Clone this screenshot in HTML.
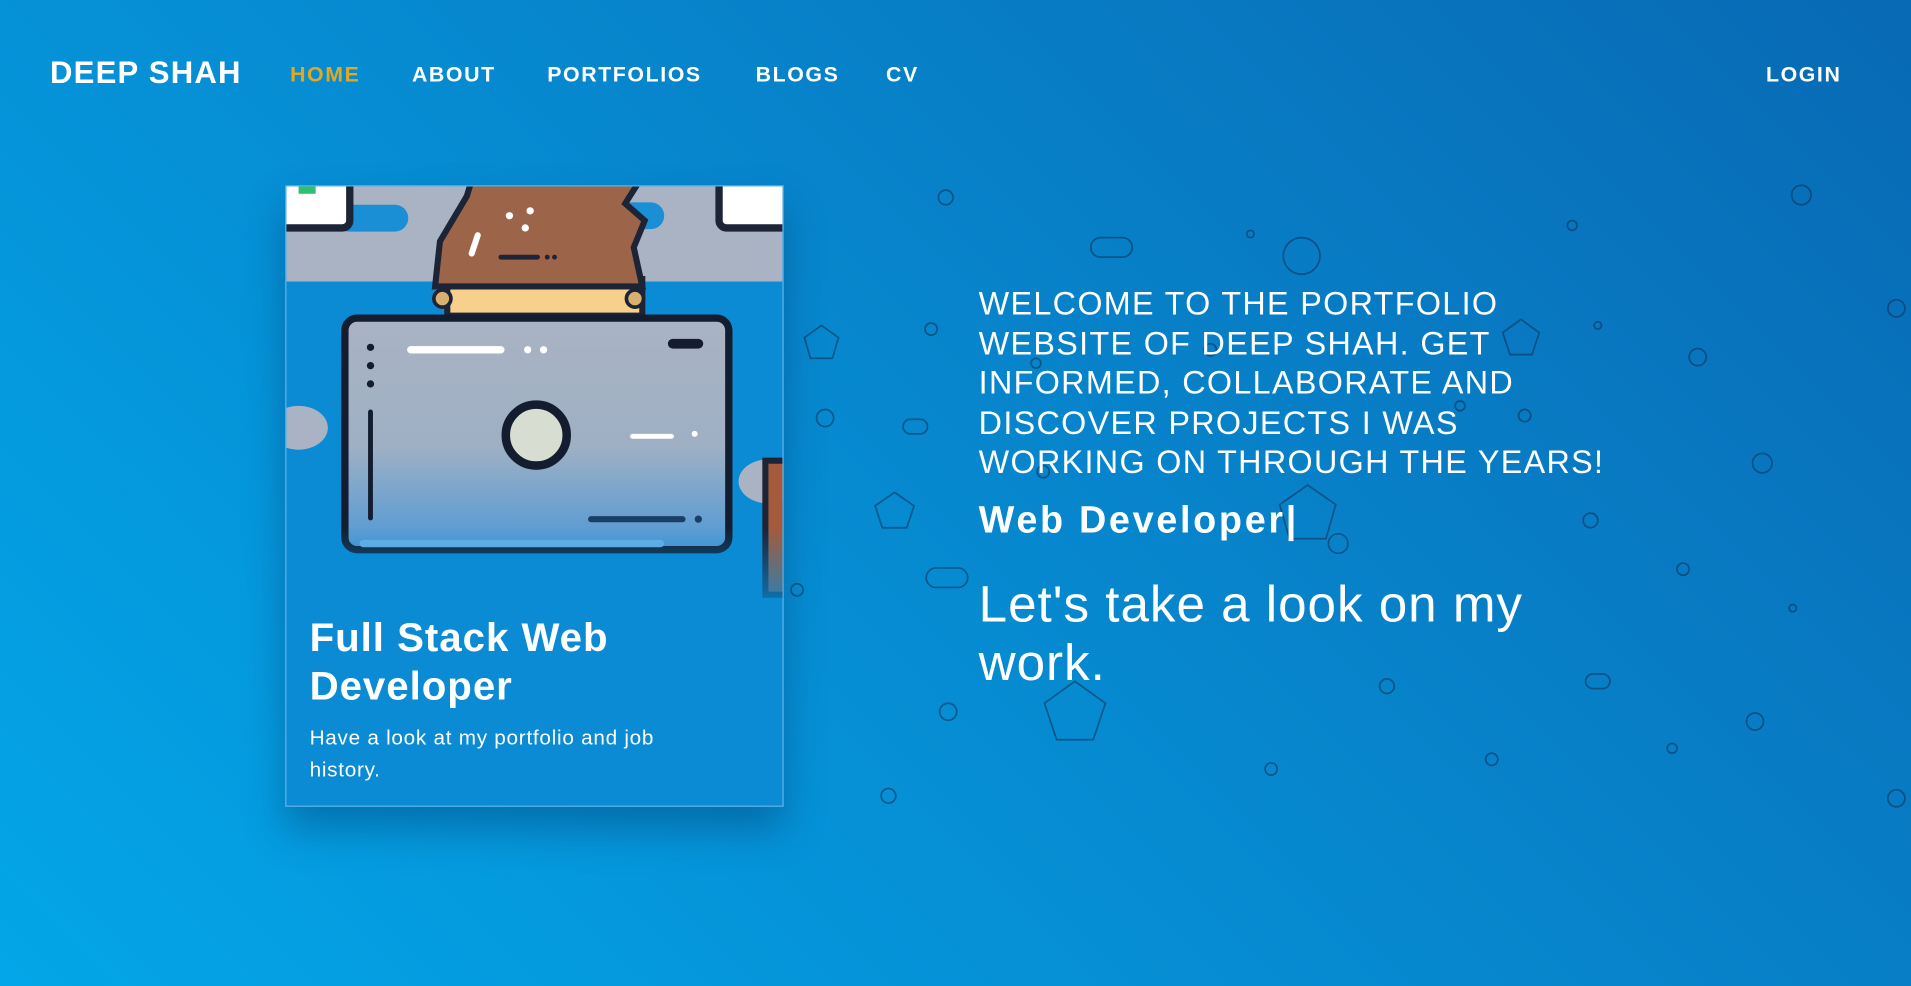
<!DOCTYPE html>
<html><head><meta charset="utf-8"><style>
html,body{margin:0;padding:0;width:1911px;height:986px;overflow:hidden;}
body{background:linear-gradient(225deg,#0869b4 0%,#0785cc 45%,#03a6e8 100%);font-family:"Liberation Sans",sans-serif;color:#fff;}
#w{position:absolute;left:0;top:0;width:1568px;height:809px;transform:scale(1.21875);transform-origin:0 0;}
.a{position:absolute;white-space:nowrap;}
.nav{font-weight:bold;font-size:17.5px;letter-spacing:1.3px;top:51px;}
.card{position:absolute;left:234px;top:152px;width:407px;height:508px;border:1px solid #5fb3ea;background:#0a8bd4;box-shadow:0 18px 30px rgba(0,40,90,.35);overflow:hidden;}
</style></head><body><div id="w">
<svg style="position:absolute;left:0;top:0" width="1568" height="809" fill="none" stroke="#0d2d50" stroke-opacity=".55" stroke-width="1.4">
<circle cx="776" cy="162" r="6"/><circle cx="1068" cy="210" r="15"/><circle cx="1026" cy="192" r="3"/><circle cx="1290" cy="185" r="4"/><circle cx="1478" cy="160" r="8"/><circle cx="764" cy="270" r="5"/><circle cx="1393" cy="293" r="7"/><circle cx="1311" cy="267" r="3"/><circle cx="1556" cy="253" r="7"/><circle cx="677" cy="343" r="7"/><circle cx="1251" cy="341" r="5"/><circle cx="1198" cy="333" r="4"/><circle cx="1446" cy="380" r="8"/><circle cx="856" cy="387" r="5"/><circle cx="1305" cy="427" r="6"/><circle cx="1098" cy="446" r="8"/><circle cx="1381" cy="467" r="5"/><circle cx="1471" cy="499" r="3"/><circle cx="654" cy="484" r="5"/><circle cx="778" cy="584" r="7"/><circle cx="1138" cy="563" r="6"/><circle cx="1440" cy="592" r="7"/><circle cx="1372" cy="614" r="4"/><circle cx="1224" cy="623" r="5"/><circle cx="1043" cy="631" r="5"/><circle cx="729" cy="653" r="6"/><circle cx="1556" cy="655" r="7"/><circle cx="993" cy="287" r="5"/><circle cx="850" cy="298" r="4"/>
<rect x="895" y="195" width="34" height="16" rx="8"/><rect x="741" y="344" width="20" height="12" rx="6"/><rect x="760" y="466" width="34" height="16" rx="8"/><rect x="1301" y="553" width="20" height="12" rx="6"/>
<polygon points="674,267 688,277 683,294 665,294 660,277"/><polygon points="1248,262 1263,273 1257,291 1239,291 1233,273"/><polygon points="734,404 750,415 744,433 724,433 718,415"/><polygon points="1073,398 1096,414 1088,442 1058,442 1050,414"/><polygon points="882,559 907,577 897,607 867,607 857,577"/>
</svg>
<div class="a" style="left:41px;top:46px;font-size:25.5px;font-weight:bold;letter-spacing:1px">DEEP SHAH</div>
<div class="a nav" style="left:238px;color:#e3a81f">HOME</div>
<div class="a nav" style="left:338px">ABOUT</div>
<div class="a nav" style="left:449px">PORTFOLIOS</div>
<div class="a nav" style="left:620px">BLOGS</div>
<div class="a nav" style="left:727px">CV</div>
<div class="a nav" style="left:1449px">LOGIN</div>
<div class="card">
<svg width="407" height="360" style="position:absolute;left:0;top:0">
<defs><linearGradient id="m" x1="0" y1="0" x2="0" y2="1"><stop offset="0" stop-color="#a9b3c3"/><stop offset=".55" stop-color="#9fb0c4"/><stop offset="1" stop-color="#4f98d6"/></linearGradient>
<linearGradient id="f" x1="0" y1="0" x2="0" y2="1"><stop offset="0" stop-color="#0a8bd4" stop-opacity="0"/><stop offset="1" stop-color="#0a8bd4"/></linearGradient></defs>
<rect x="0" y="0" width="407" height="78" fill="#a9b3c3"/>
<rect x="40" y="15" width="60" height="22" rx="11" fill="#1b8fd6"/><rect x="270" y="13" width="40" height="22" rx="11" fill="#1b8fd6"/>
<rect x="-10" y="-10" width="62" height="44" rx="6" fill="#fff" stroke="#1c2436" stroke-width="6"/><rect x="10" y="0" width="14" height="6" fill="#2fbf71"/>
<rect x="355" y="-10" width="62" height="44" rx="6" fill="#fff" stroke="#1c2436" stroke-width="6"/>
<ellipse cx="10" cy="198" rx="24" ry="18" fill="#a9b3c3"/><ellipse cx="395" cy="242" rx="24" ry="18" fill="#a9b3c3"/>
<rect x="393" y="225" width="20" height="110" fill="#a45a3b" stroke="#1c2436" stroke-width="5"/>
<rect x="132" y="76" width="160" height="30" fill="#f6d08c" stroke="#1c2436" stroke-width="5"/>
<circle cx="128" cy="92" r="7" fill="#d9b070" stroke="#1c2436" stroke-width="3"/><circle cx="286" cy="92" r="7" fill="#d9b070" stroke="#1c2436" stroke-width="3"/>
<path d="M122 82 L126 45 L148 8 L152 -5 L290 -5 L278 14 L294 28 L285 50 L292 82 Z" fill="#9c6448" stroke="#1c2436" stroke-width="5"/>
<path d="M176 58 L206 58" stroke="#1c2436" stroke-width="4" stroke-linecap="round"/><circle cx="214" cy="58" r="2" fill="#1c2436"/><circle cx="220" cy="58" r="2" fill="#1c2436"/>
<circle cx="183" cy="24" r="3" fill="#fff"/><circle cx="196" cy="34" r="3" fill="#fff"/><circle cx="200" cy="20" r="3" fill="#fff"/>
<path d="M152 55 L157 40" stroke="#fff" stroke-width="5" stroke-linecap="round"/>
<path d="M130 300 L145 240 L170 300 Z M230 300 L255 240 L275 300 Z" fill="#5a9ec9"/>
<rect x="48" y="108" width="315" height="190" rx="10" fill="url(#m)" stroke="#141d30" stroke-width="6"/>
<rect x="60" y="290" width="250" height="6" rx="3" fill="#6cb4e8"/>
<circle cx="69" cy="132" r="3" fill="#141d30"/><circle cx="69" cy="147" r="3" fill="#141d30"/><circle cx="69" cy="162" r="3" fill="#141d30"/>
<path d="M69 185 L69 272" stroke="#141d30" stroke-width="4" stroke-linecap="round"/>
<path d="M102 134 L176 134" stroke="#fff" stroke-width="6" stroke-linecap="round"/><circle cx="198" cy="134" r="3" fill="#fff"/><circle cx="211" cy="134" r="3" fill="#fff"/>
<path d="M317 129 L338 129" stroke="#141d30" stroke-width="8" stroke-linecap="round"/>
<path d="M284 205 L316 205" stroke="#fff" stroke-width="4" stroke-linecap="round"/><circle cx="335" cy="203" r="2.5" fill="#fff"/>
<path d="M250 273 L325 273" stroke="#1a3f66" stroke-width="5" stroke-linecap="round"/><circle cx="338" cy="273" r="3" fill="#1a3f66"/>
<circle cx="205" cy="204" r="25" fill="#d8ddd1" stroke="#141d30" stroke-width="7"/>
<rect x="0" y="280" width="407" height="80" fill="url(#f)"/>
</svg>
<div class="a" style="left:19px;top:350px;font-size:33px;font-weight:bold;line-height:40px;letter-spacing:.8px">Full Stack Web<br>Developer</div>
<div class="a" style="left:19px;top:440px;font-size:17px;line-height:26px;letter-spacing:.6px">Have a look at my portfolio and job<br>history.</div>
</div>
<div class="a" style="left:803px;top:233px;font-size:26.5px;line-height:32.5px;letter-spacing:1.1px">WELCOME TO THE PORTFOLIO<br>WEBSITE OF DEEP SHAH. GET<br>INFORMED, COLLABORATE AND<br>DISCOVER PROJECTS I WAS<br>WORKING ON THROUGH THE YEARS!</div>
<div class="a" style="left:803px;top:409px;font-size:31px;font-weight:bold;letter-spacing:2.2px">Web Developer|</div>
<div class="a" style="left:803px;top:472px;font-size:42px;line-height:48px;letter-spacing:.8px">Let's take a look on my<br>work.</div>
</div></body></html>
